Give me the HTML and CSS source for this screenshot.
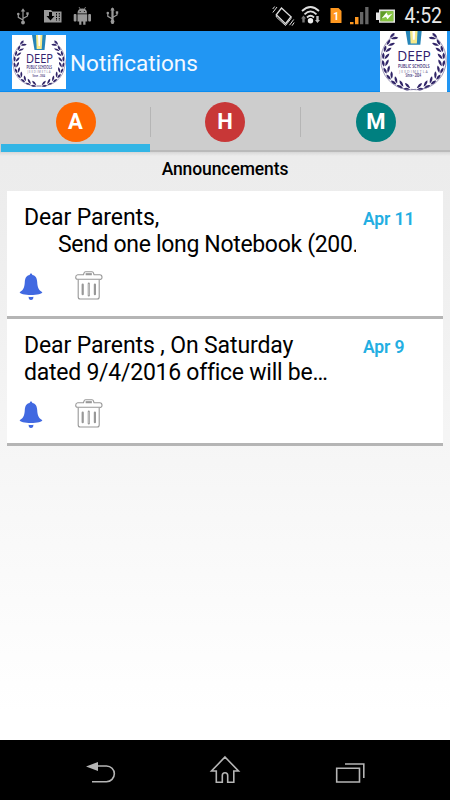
FILE: index.html
```
<!DOCTYPE html>
<html lang="en">
<head>
<meta charset="utf-8">
<title>Notifications</title>
<link rel="stylesheet" href="styles.css">
</head>
<body>
<svg class="defs" width="0" height="0" aria-hidden="true">
  <defs>
    <g id="leaf">
      <path d="M26 51.5Q22.5 53.2 20.5 51Q23.5 49.2 26 51.5Z"/>
      <path d="M26 50.4Q24.5 46.5 21.5 46.3Q22 49.5 26 50.4Z"/>
    </g>
    <g id="branch">
      <use href="#leaf" transform="rotate(4 27 27)"/>
      <use href="#leaf" transform="rotate(18 27 27)"/>
      <use href="#leaf" transform="rotate(32 27 27)"/>
      <use href="#leaf" transform="rotate(46 27 27)"/>
      <use href="#leaf" transform="rotate(60 27 27)"/>
      <use href="#leaf" transform="rotate(74 27 27)"/>
      <use href="#leaf" transform="rotate(88 27 27)"/>
      <use href="#leaf" transform="rotate(102 27 27)"/>
      <use href="#leaf" transform="rotate(116 27 27)"/>
      <use href="#leaf" transform="translate(-1 -1) rotate(130 27 27)"/>
      <path d="M29 51A24 24 0 0 1 12 7" fill="none" stroke="#77709c" stroke-width=".6"/>
    </g>
    <symbol id="crest" viewBox="0 0 54 54">
      <rect width="54" height="54" fill="#fff"/>
      <path d="M20 0H34L32.500 15H22.500Z" fill="#2585b8"/>
      <path d="M24 0H30.500L29.700 14H24.700Z" fill="#f7e98a"/>
      <path d="M26 0H28.500L28 11H26.500Z" fill="#fff"/>
      <g fill="#302467">
        <use href="#branch"/>
        <use href="#branch" transform="matrix(-1 0 0 1 54 0)"/>
      </g>
      <g font-family="Open Sans, sans-serif" fill="#30206d">
        <text x="14" y="27.900" font-size="11.800" font-weight="500" textLength="27" lengthAdjust="spacingAndGlyphs">DEEP</text>
        <text x="14.500" y="34.200" font-size="4.400" font-weight="600" textLength="25.500" lengthAdjust="spacingAndGlyphs">PUBLIC SCHOOLS</text>
        <text x="15.500" y="37.500" font-size="2.800" textLength="23" fill="#77719a">JEEDIMETLA</text>
        <text x="20.500" y="41.500" font-size="4" font-weight="600" textLength="12.500" lengthAdjust="spacingAndGlyphs">Since - 2004</text>
      </g>
    </symbol>
    <symbol id="bell" viewBox="0 0 24 28">
      <path d="M12 .5c.8 0 1.300.7 1.300 1.600C16.700 2.700 18 5.500 18.200 9c.3 5.600 1.300 7.800 5.100 10.200C23.500 20.700 18 22 12 22S.5 20.700.7 19.200C4.500 16.800 5.500 14.600 5.800 9 6 5.500 7.300 2.700 10.700 2.100 10.700 1.200 11.200.5 12 .5Z" fill="#4169e1"/>
      <path d="M9.600 23.800Q12 24.400 14.400 23.800Q14.400 27 12 27T9.600 23.800Z" fill="#4169e1"/>
    </symbol>
    <symbol id="trash" viewBox="0 0 28 29">
      <g fill="none" stroke="#989898" stroke-width="1.100">
        <path d="M3.200 8.500V26Q3.200 28 5.200 28H22.200Q24.200 28 24.200 26V8.500"/>
        <path d="M2.700 3.800H8.500L9 2Q9.300.8 10.500.8H17Q18.200.8 18.500 2L19 3.800H24.800Q27 3.800 27 6.200T24.800 8.300H2.700Q.7 8.300.7 6.200T2.700 3.800Z"/>
        <path d="M11.200 3.700V2.700H16.300V3.700Z"/>
      </g>
      <path d="M7.700 13.500V23.200M13.800 12.700V24.500M19.900 13.500V23.200" fill="none" stroke="#989898" stroke-width="2.200" stroke-linecap="round"/>
      <path d="M13.800 13V24.200" stroke="#ddd" stroke-width=".7"/>
    </symbol>
    <g id="usb">
      <path d="M6.500 3V14.500M6.500 12L1.800 9.300V6.500M6.500 10.500L11 8V5.500" fill="none" stroke="#999" stroke-width="1.200"/>
      <path d="M4.300 3.500L6.500.2 8.700 3.500Z" fill="#999"/>
      <circle cx="6.500" cy="14.500" r="1.900" fill="#999"/>
      <circle cx="1.800" cy="6" r="1.300" fill="#999"/>
      <rect x="9.800" y="4.300" width="2.400" height="2.400" fill="#999"/>
    </g>
  </defs>
</svg>

<div class="status">
  <svg width="450" height="31" viewBox="0 0 450 31">
    <use href="#usb" x="16.500" y="8"/>
    <g fill="#999">
      <path d="M44 10H51L52.500 11.500H61.500V22.500H44Z"/>
      <path d="M49 12H52V16H54.500L50.500 20.500 46.500 16H49Z" fill="#000"/>
      <path d="M56.500 13V21M59.300 13V21" stroke="#000" stroke-width="1" stroke-dasharray="1.500 1"/>
      <path d="M77.500 13.500Q77.500 8.500 82.300 8.500T87 13.500Z"/>
      <path d="M79 7L80.500 9.500M85.600 7L84.100 9.500" stroke="#999" stroke-width=".8"/>
      <path d="M77.500 14.300H87.200V21.500H85.500V24.700H83.200V21.500H81.400V24.700H79.200V21.500H77.500Z"/>
      <rect x="73.700" y="14" width="2.800" height="7.500" rx="1"/><rect x="88.200" y="14" width="2.800" height="7.500" rx="1"/>
      <circle cx="80.200" cy="11.500" r=".6" fill="#000"/><circle cx="84.400" cy="11.500" r=".6" fill="#000"/>
    </g>
    <g transform="translate(106 7)">
      <use href="#usb"/>
      <path d="M6.500 1V17" stroke="#999" stroke-width="2.200"/>
    </g>
    <g fill="none" stroke="#ddd" stroke-width="1.300">
      <path d="M281.500 8L291 16.700 285.500 23.700 276.300 14.800Z"/>
      <path d="M276.300 15V17L285.500 25.500 291 18.500V16.700" stroke-width="1"/>
      <path d="M277 7L272.800 12.500M274.700 6.500L272.700 9M289.500 25.200L293.700 19.500M292 25.700L294.200 22.500" stroke-width="1"/>
    </g>
    <g fill="none" stroke="#ddd" stroke-width="1.800">
      <path d="M302 11Q310.500 3 319 11M304.500 14.300Q310.500 8.500 316.500 14.300M307 17.500Q310.500 14 314 17.500"/>
    </g>
    <circle cx="310.500" cy="20.800" r="2.700" fill="#eee"/>
    <path d="M303.500 15.500L306 18.500H304.700V22.500H302.300V18.500H301Z" fill="#777"/>
    <path d="M317.500 23L320 20H318.700V16H316.300V20H315Z" fill="#bbb"/>
    <path d="M330.500 8H338.500L341.500 11V23H330.500Z" fill="#ff9820"/>
    <text x="333.300" y="19.700" class="sim">1</text>
    <path d="M350 22H353.500V24.300H350ZM355 17H358.500V24.300H355Z" fill="#ff9820"/>
    <path d="M360 12H363.300V24.300H360ZM365.200 7H368.500V24.300H365.200Z" fill="#666"/>
    <path d="M379 9.500H395V22.700H379V20H376V12.500H379Z" fill="#e5e5e5"/>
    <rect x="380.300" y="11.200" width="13" height="10" fill="#619c2a"/>
    <path d="M380.300 21.200L387 11.200H393.300V21.200Z" fill="#86c442"/>
    <path d="M381.500 18.500L386.500 12.500 388 15.500 392.500 13.500 387.500 19.300 386 16.700Z" fill="#fff"/>
    <text x="404.500" y="23.300" class="clock" textLength="37.500" lengthAdjust="spacingAndGlyphs">4:52</text>
  </svg>
</div>

<header class="bar">
  <svg class="logo" viewBox="0 0 54 54"><use href="#crest" width="54" height="54"/></svg>
  <h1 class="title">Notifications</h1>
  <svg class="logo-wide" viewBox="0 4 54 49.200" preserveAspectRatio="none"><use href="#crest" width="54" height="54"/></svg>
</header>

<nav class="tabs">
  <div class="tab active"><span class="dot orange">A</span></div>
  <div class="tab"><span class="dot red">H</span></div>
  <div class="tab last"><span class="dot teal">M</span></div>
</nav>

<main class="content">
  <h2 class="heading">Announcements</h2>
  <article class="card">
    <div class="row">
      <p class="message">Dear Parents,<br><span class="indent">Send one long Notebook (200.</span></p>
      <time class="date">Apr 11</time>
    </div>
    <div class="actions">
      <svg class="bell"><use href="#bell"/></svg>
      <svg class="trash"><use href="#trash"/></svg>
    </div>
  </article>
  <article class="card">
    <div class="row">
      <p class="message">Dear Parents , On Saturday<br><span class="second">dated 9/4/2016 office will be…</span></p>
      <time class="date">Apr 9</time>
    </div>
    <div class="actions">
      <svg class="bell"><use href="#bell"/></svg>
      <svg class="trash"><use href="#trash"/></svg>
    </div>
  </article>
</main>

<footer class="navbar">
  <svg width="450" height="60" viewBox="0 0 450 60" fill="none" stroke="#b5b5b5" stroke-width="1.600">
    <path d="M97 26H106.500A7.700 7.700 0 0 1 106.500 41.700H92"/>
    <path d="M86 26.500L98 22V31Z" fill="#b5b5b5" stroke="none"/>
    <path d="M225 17L238.500 31H233.800V42.200H227.700V35.500Q227.700 32.800 225 32.800T222.300 35.500V42.200H216.300V31H211.500Z"/>
    <path d="M336.700 28.200H359.500V42H336.700ZM345 24H363.800V38"/>
  </svg>
</footer>
</body>
</html>
```

FILE: styles.css
```
* { box-sizing: border-box; }

body {
  margin: 0;
  width: 450px;
  height: 800px;
  overflow: hidden;
  display: flex;
  flex-direction: column;
  font-family: Roboto, sans-serif;
  color: #000;
  background: #000;
}

svg { display: block; flex: none; }
h1, h2, p { margin: 0; }
.defs { position: absolute; }

.status { height: 31px; background: #000; }
.clock { font-size: 22px; fill: #e8e8e8; }
.sim { font-size: 10px; font-weight: 700; fill: #fff; }

.bar {
  height: 61px;
  padding: 0 3px 0 12px;
  display: flex;
  align-items: center;
  background: #2196f3;
  border-bottom: 1px solid #0b8cf0;
}
.logo { width: 54px; height: 54px; margin-top: 1px; }
.title {
  margin: 3px 0 0 4px;
  font-size: 22.500px;
  line-height: 28px;
  font-weight: 400;
  letter-spacing: 0;
  color: #f4f9ff;
}
.logo-wide { width: 67px; height: 61px; margin: 0 0 -1px auto; }

.tabs {
  height: 60px;
  display: grid;
  grid-template-columns: repeat(3, 1fr);
  background: #cdcdcd;
  border-top: 1px solid #c8c8c8;
}
.tab {
  display: flex;
  justify-content: center;
  padding-top: 9px;
  border-bottom: 2px solid #bababa;
  background: linear-gradient(#b5b5b5, #b5b5b5) 0 14px / 1px 30px no-repeat;
}
.tab.active {
  margin-left: 1px;
  background: none;
  border-bottom: 8px solid #33b5e5;
}
.tab.last { padding-left: 2px; }
.dot {
  width: 40px;
  height: 40px;
  border-radius: 50%;
  color: #fff;
  font: 700 22px/40px Roboto, sans-serif;
  text-align: center;
}
.orange { background: #ff6600; }
.red { background: #c83737; }
.teal { background: #008080; }

.content {
  height: 588px;
  padding: 0 7px;
  background: linear-gradient(#d7d7d7, #ececec 4px, #ededed 60px, #fff 560px);
}
.heading {
  height: 39px;
  font-size: 17.500px;
  line-height: 35px;
  font-weight: 500;
  letter-spacing: -.1px;
  text-align: center;
}
.card {
  height: 128px;
  padding: 14px 0 0 17px;
  background: #fff;
  border-bottom: 3px solid #b5b5b5;
}
.card + .card { height: 127px; }
.row { display: flex; height: 66px; }
.message {
  width: 332px;
  overflow: hidden;
  white-space: nowrap;
  font-size: 23px;
  line-height: 26.500px;
  letter-spacing: -.12px;
}
.indent { padding-left: 34px; letter-spacing: -.33px; }
.second { letter-spacing: -.25px; }
.date {
  margin-left: 7px;
  font-size: 17.500px;
  line-height: 29px;
  font-weight: 600;
  letter-spacing: -.1px;
  color: #23aee2;
}
.actions { display: flex; align-items: flex-start; margin-left: -5px; }
.bell { width: 24px; height: 28px; margin-top: 2px; }
.trash { width: 28px; height: 29px; margin-left: 32px; }

.navbar { height: 60px; background: #000; }
```
